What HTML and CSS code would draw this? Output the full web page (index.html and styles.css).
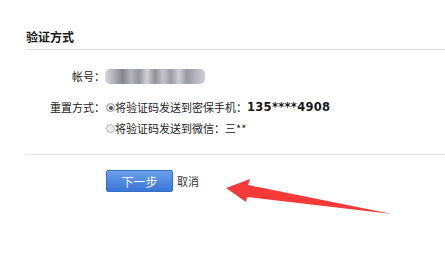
FILE: index.html
```html
<!DOCTYPE html>
<html>
<head>
<meta charset="utf-8">
<link rel="stylesheet" href="styles.css">
</head>
<body>
<div class="page">
  <div class="title">验证方式</div>
  <div class="form">
    <div class="row">
      <div class="label">帐号：</div>
      <div class="field"><span class="blur"></span></div>
    </div>
    <div class="row first-opt">
      <div class="label">重置方式：</div>
      <div class="field"><span class="radio checked"></span>将验证码发送到密保手机：<b class="num">135****4908</b></div>
    </div>
    <div class="row">
      <div class="label"></div>
      <div class="field"><span class="radio"></span>将验证码发送到微信：三**</div>
    </div>
  </div>
  <div class="actions">
    <span class="btn">下一步</span>
    <span class="cancel">取消</span>
  </div>
</div>
<svg class="arrow" width="445" height="278" viewBox="0 0 445 278">
  <polygon points="226,188 250,179 248,185 392,214 247,197 246,202" fill="#f53a3a"/>
</svg>
</body>
</html>
```
FILE: styles.css
```css
html, body {
  margin: 0;
  padding: 0;
  background: #fff;
}
body {
  width: 445px;
  height: 278px;
  overflow: hidden;
  position: relative;
  font-family: "Noto Sans CJK SC", "Noto Sans", sans-serif;
  font-size: 11px;
  color: #222;
}
.page {
  padding-left: 26px;
}
.title {
  padding-top: 29px;
  padding-bottom: 4px;
  line-height: 16px;
  font-size: 12px;
  font-weight: bold;
  color: #1a1a1a;
  border-bottom: 1px solid #dedede;
}
.form {
  padding-top: 16px;
  padding-bottom: 15px;
  border-bottom: 1px solid #e6e6e6;
}
.row {
  display: grid;
  grid-template-columns: 79px auto;
  height: 21px;
  line-height: 21px;
}
.first-opt {
  margin-top: 10px;
}
.label {
  text-align: right;
}
.field {
  display: flex;
  align-items: center;
  white-space: nowrap;
}
.blur {
  display: inline-block;
  width: 100px;
  height: 15px;
  border-radius: 5px;
  background: linear-gradient(90deg, #cfd0d6 0%, #9b9ba4 10%, #6f6f78 18%, #a7a7b0 26%, #80808b 34%, #c9c9cf 42%, #7c7c84 50%, #b8b8bf 58%, #8a8a96 66%, #c4c4ca 74%, #868692 82%, #a5a5b2 90%, #c7c7d0 100%);
  opacity: 0.85;
}
.radio {
  display: inline-block;
  box-sizing: border-box;
  width: 9px;
  height: 9px;
  border-radius: 50%;
  border: 1px solid #b5b5b5;
  background: #ececec;
  margin-left: 1px;
  position: relative;
}
.radio.checked {
  background: #e8e8e8;
  border-color: #9a9a9a;
}
.radio.checked::after {
  content: "";
  position: absolute;
  left: 1.5px;
  top: 1.5px;
  width: 4px;
  height: 4px;
  border-radius: 50%;
  background: #555;
}
.num {
  font-family: "DejaVu Sans", sans-serif;
  font-weight: bold;
  font-size: 11.5px;
  letter-spacing: 0.3px;
  color: #1a1a1a;
}
.actions {
  display: flex;
  align-items: center;
  padding-top: 15px;
  padding-left: 80px;
}
.btn {
  display: inline-block;
  width: 67px;
  height: 22px;
  line-height: 22px;
  text-align: center;
  color: #fff;
  font-size: 12px;
  border-radius: 2px;
  background: linear-gradient(#6aa1ea, #3b75d6);
  border: 1px solid #3a6fc9;
  box-sizing: border-box;
}
.cancel {
  margin-left: 4px;
  font-size: 11px;
  color: #333;
}
.arrow {
  position: absolute;
  left: 0;
  top: 0;
}
```
